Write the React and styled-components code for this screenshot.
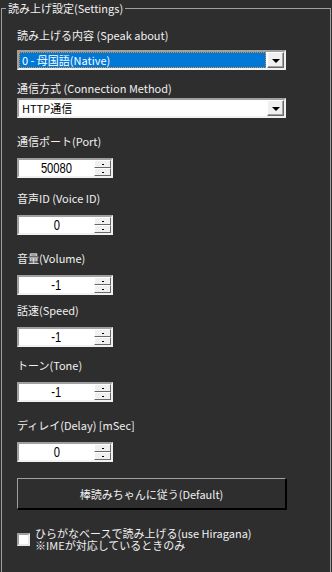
import React from "react"
import styled, { createGlobalStyle } from "styled-components"

const GlobalStyle = createGlobalStyle`
  html, body {
    margin: 0;
    padding: 0;
    background: #2e2e2e;
    overflow: hidden;
  }
  body {
    font-family: "Noto Sans CJK JP", "Noto Sans", sans-serif;
    font-size: 11px;
    color: #f0f0f0;
  }
`

const Page = styled.div`
  width: 332px;
  height: 572px;
  overflow: hidden;
  background: #2e2e2e;
`

const GroupBox = styled.fieldset`
  margin: 0 0 0 1px;
  padding: 0;
  width: 330px;
  height: 600px;
  box-sizing: border-box;
  border: 1px solid #a0a0a0;
  border-bottom: none;
  min-width: 0;
`

const Legend = styled.legend`
  margin-left: 4px;
  padding: 0 2px;
  height: 16px;
  line-height: 16px;
  font-size: 11px;
  color: #f0f0f0;
`

const Body = styled.div`
  padding-left: 15px;
  display: flex;
  flex-direction: column;
  align-items: flex-start;
`

const Label = styled.div`
  margin-top: ${({ $gap }) => $gap}px;
  height: 16px;
  line-height: 16px;
  font-size: 11px;
  white-space: nowrap;
  color: #f0f0f0;
`

const Sunken = styled.div`
  margin-top: ${({ $gap }) => $gap}px;
  box-sizing: border-box;
  height: 20px;
  width: ${({ $width }) => $width}px;
  border: 2px solid;
  border-color: #a0a0a0 #f0f0f0 #f0f0f0 #a0a0a0;
  background: #ffffff;
  display: flex;
  align-items: stretch;
`

const ComboText = styled.div`
  flex: 1;
  margin: 0 1px 0 0;
  box-sizing: border-box;
  padding-left: 2px;
  line-height: 14px;
  font-size: 11px;
  color: ${({ $selected }) => ($selected ? "#ffffff" : "#000000")};
  background: ${({ $selected }) => ($selected ? "#0078d7" : "transparent")};
  border: 1px dotted ${({ $selected }) => ($selected ? "#f08a24" : "transparent")};
  white-space: nowrap;
  overflow: hidden;
`

const DropButton = styled.div`
  width: 17px;
  box-sizing: border-box;
  background: #f0f0f0;
  border: 1px solid;
  border-color: #ffffff #696969 #696969 #ffffff;
  box-shadow: inset -1px -1px 0 #a0a0a0;
  display: flex;
  align-items: center;
  justify-content: center;
`

const Triangle = styled.span`
  width: 0;
  height: 0;
  border-left: 4px solid transparent;
  border-right: 4px solid transparent;
  border-top: 4px solid #000000;
  margin-top: 1px;
`

const SpinValue = styled.div`
  flex: 1;
  display: flex;
  align-items: center;
  justify-content: center;
  color: #000000;
  font-family: "Liberation Sans", Arial, sans-serif;
  font-size: 14px;
`

const Digits = styled.span`
  display: inline-block;
  transform: scaleX(0.8);
`

const SpinButtons = styled.div`
  width: 17px;
  display: flex;
  flex-direction: column;
`

const SpinButton = styled.div`
  flex: 1;
  box-sizing: border-box;
  background: #f0f0f0;
  border: 1px solid;
  border-color: #ffffff #696969 #696969 #ffffff;
  display: flex;
  align-items: center;
  justify-content: center;
  &::after {
    content: "";
    width: 2px;
    height: 1px;
    background: #000000;
  }
`

const PushButton = styled.button`
  margin-top: 16px;
  width: 269px;
  height: 31px;
  box-sizing: border-box;
  background: #2e2e2e;
  color: #f0f0f0;
  font-family: inherit;
  font-size: 11px;
  border: 1px solid;
  border-color: #a0a0a0 #000000 #000000 #a0a0a0;
  box-shadow: 1px 1px 0 #000000;
  padding: 0;
`

const CheckRow = styled.label`
  margin-top: 18px;
  display: flex;
  align-items: center;
  gap: 5px;
`

const CheckBox = styled.span`
  width: 13px;
  height: 13px;
  box-sizing: border-box;
  background: #ffffff;
  border: 2px solid;
  border-color: #a0a0a0 #e8e8e8 #e8e8e8 #a0a0a0;
  flex: none;
`

const CheckText = styled.div`
  font-size: 11px;
  line-height: 12px;
  white-space: nowrap;
`

const Combo = ({ gap, value, selected }) => (
  <Sunken $gap={gap} $width={269}>
    <ComboText $selected={selected}>{value}</ComboText>
    <DropButton>
      <Triangle />
    </DropButton>
  </Sunken>
)

const Spinner = ({ gap, value }) => (
  <Sunken $gap={gap} $width={96}>
    <SpinValue>
      <Digits>{value}</Digits>
    </SpinValue>
    <SpinButtons>
      <SpinButton />
      <SpinButton />
    </SpinButtons>
  </Sunken>
)

const spinners = [
  { label: "通信ポート(Port)", value: "50080", gap: 15 },
  { label: "音声ID (Voice ID)", value: "0", gap: 12 },
  { label: "音量(Volume)", value: "-1", gap: 15 },
  { label: "話速(Speed)", value: "-1", gap: 7 },
  { label: "トーン(Tone)", value: "-1", gap: 10 },
  { label: "ディレイ(Delay)  [mSec]", value: "0", gap: 15 },
]

const App = () => (
  <Page>
    <GlobalStyle />
    <GroupBox>
      <Legend>読み上げ設定(Settings)</Legend>
      <Body>
        <Label $gap={11}>読み上げる内容 (Speak about)</Label>
        <Combo gap={7} value="0 - 母国語(Native)" selected />
        <Label $gap={10}>通信方式 (Connection Method)</Label>
        <Combo gap={2} value="HTTP通信" />
        {spinners.map((s) => (
          <React.Fragment key={s.label}>
            <Label $gap={s.gap}>{s.label}</Label>
            <Spinner gap={9} value={s.value} />
          </React.Fragment>
        ))}
        <PushButton>棒読みちゃんに従う(Default)</PushButton>
        <CheckRow>
          <CheckBox />
          <CheckText>
            ひらがなベースで読み上げる(use Hiragana)
            <br />
            ※IMEが対応しているときのみ
          </CheckText>
        </CheckRow>
      </Body>
    </GroupBox>
  </Page>
)

export default App
